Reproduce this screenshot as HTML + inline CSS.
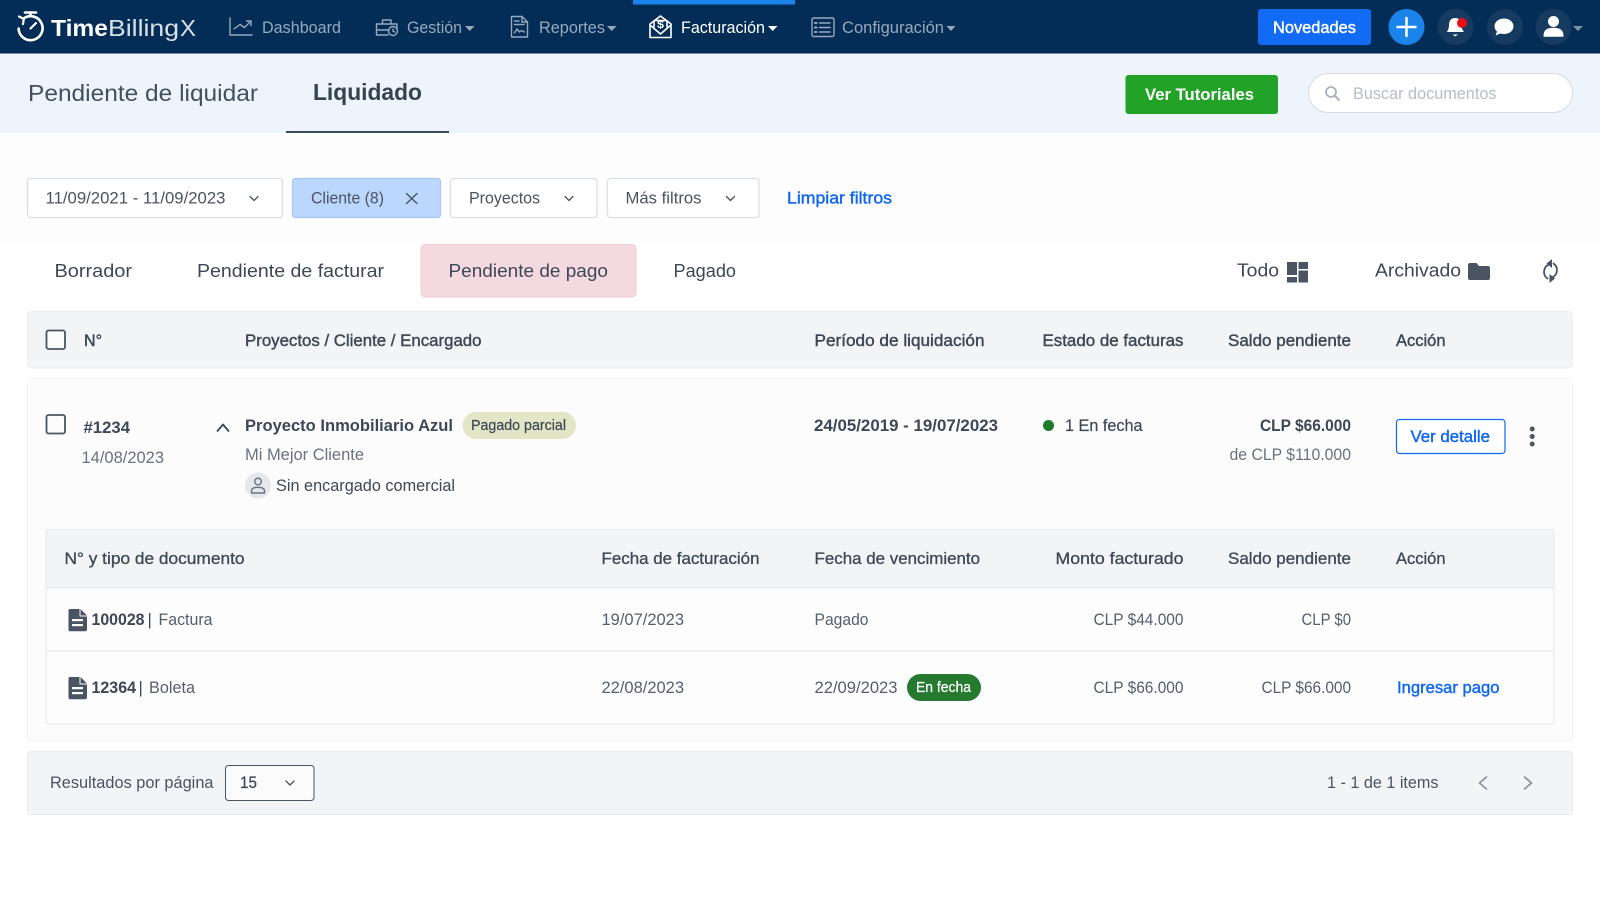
<!DOCTYPE html>
<html lang="es"><head><meta charset="utf-8"><title>TimeBillingX</title>
<style>
html,body{margin:0;padding:0;background:#fff;width:1600px;height:905px;overflow:hidden}
svg{display:block}
text{font-family:"Liberation Sans",sans-serif;font-size:16.6px;fill:#4a5461;white-space:pre}
.s{stroke:currentColor;stroke-width:.42px}
.b{font-weight:700}
.nav{fill:#98a9bc}
.d{fill:#3d4856;color:#3d4856}
.g{fill:#69727f}
.m{fill:#555f6c}
.l{fill:#1168f0;color:#1168f0}
.w{fill:#fff;color:#fff}
.i{fill:none;stroke:#98a9bc;stroke-width:1.4;stroke-linecap:round;stroke-linejoin:round}
.iw{fill:none;stroke:#fff;stroke-width:1.7;stroke-linecap:round;stroke-linejoin:round}
.ch{fill:none;stroke:#4a5461;stroke-width:1.3;stroke-linecap:round;stroke-linejoin:round}
</style></head><body>
<svg width="1600" height="905" viewBox="0 0 1600 905" xmlns="http://www.w3.org/2000/svg">
<rect width="1600" height="905" fill="#fff"/>
<!-- top nav -->
<rect width="1600" height="53" fill="#032d57"/>
<rect x="633" width="162" height="4.5" fill="#1b84ea"/>
<g class="iw" style="stroke-width:2.6">
<path d="M25 12.5H36"/><path d="M30.5 12.5V15.5"/>
<path d="M23.5 18.5A12 12 0 1 1 18.6 28.5"/><path d="M19 16.5L23.8 19L23 24" style="stroke-width:2.2"/>
<path d="M30.5 28.5L36 23" style="stroke-width:2.2"/>
</g>
<text x="51" y="36" textLength="57" lengthAdjust="spacingAndGlyphs" class="b w" style="font-size:23.5px">Time</text>
<text x="108" y="36" textLength="71" lengthAdjust="spacingAndGlyphs" class="w" style="font-size:23.5px;opacity:.85">Billing</text>
<text x="180" y="36" textLength="16" lengthAdjust="spacingAndGlyphs" class="w" style="font-size:23.5px;opacity:.85">X</text>
<g class="i">
<path d="M230 18V35H252"/><path d="M234 29L240 24.5L244.5 27.5L250.5 21.5"/><path d="M246.5 21H251V25.5"/>
<path d="M376.5 24H397V29"/><path d="M376.5 24V35H388"/><path d="M376.5 30H389"/><path d="M382.5 24V20H391V24"/><circle cx="393" cy="31" r="4.5"/><path d="M393 29V31.2L394.8 32"/>
<path d="M511.5 16.5H522L527.5 22V37H511.5Z"/><path d="M522 16.5V22H527.5"/><path d="M514.5 21H519M514.5 24.5H524"/><path d="M514.5 33L517 29L519.5 32L521.5 30.5L524.5 32"/>
<rect x="812" y="18" width="22" height="18.5" rx="1.5"/><path d="M819.5 23H830M819.5 27.5H830M819.5 32H830"/><path d="M815 23H816.5M815 27.5H816.5M815 32H816.5" style="stroke-width:2"/>
</g>
<g class="iw" style="stroke-width:1.6">
<path d="M650 24L660.5 16L671 24V37.5H650Z"/><path d="M650 25L660.5 34L671 25"/>
<path d="M654 27V20.5H667V27"/>
</g>
<text x="657" y="28" textLength="7" lengthAdjust="spacingAndGlyphs" class="b w" style="font-size:11px">$</text>
<text x="262" y="33" textLength="79" lengthAdjust="spacingAndGlyphs" class="nav">Dashboard</text>
<text x="407" y="33" textLength="55" lengthAdjust="spacingAndGlyphs" class="nav">Gestión</text>
<text x="539" y="33" textLength="66" lengthAdjust="spacingAndGlyphs" class="nav">Reportes</text>
<text x="681" y="33" textLength="84" lengthAdjust="spacingAndGlyphs" class="w">Facturación</text>
<text x="842" y="33" textLength="102" lengthAdjust="spacingAndGlyphs" class="nav">Configuración</text>
<path d="M465 26H474.5L469.7 31Z" fill="#98a9bc"/><path d="M607 26H616.5L611.7 31Z" fill="#98a9bc"/>
<path d="M768 26H777.5L772.7 31Z" fill="#fff"/><path d="M946.5 26H955.5L951 31Z" fill="#98a9bc"/>
<path d="M1573 26H1583L1578 31Z" fill="#7f93a8"/>
<rect x="1258" y="9" width="113" height="36" rx="3" fill="#116bf5"/>
<text x="1273" y="33" textLength="83" lengthAdjust="spacingAndGlyphs" class="w s">Novedades</text>
<circle cx="1406.5" cy="27" r="18" fill="#1b84ea"/>
<path d="M1406.5 18V36M1397.5 27H1415.5" stroke="#fff" stroke-width="2.5" stroke-linecap="round"/>
<circle cx="1455.5" cy="27" r="18" fill="#163a60"/><circle cx="1505" cy="27" r="18" fill="#163a60"/><circle cx="1553.5" cy="27" r="18" fill="#163a60"/>
<path d="M1455 18C1450.5 18 1449 21.5 1449 25C1449 29 1447.5 30.5 1447 32H1464C1463 30.5 1461.5 29 1461.5 25C1461.5 21.5 1460 18 1455 18Z" fill="#fff"/>
<path d="M1452.5 34.5H1458L1455.2 36.5Z" fill="#fff"/><circle cx="1462" cy="23" r="5" fill="#ee0c16"/>
<path d="M1504 18.5C1498.5 18.500 1494.5 22 1494.5 26.3C1494.5 28.5 1495.500 30.3 1497 31.5L1495.5 35.5L1500.5 33.5C1501.5 33.9 1502.8 34.1 1504 34.1C1509.5 34.1 1513.5 30.6 1513.5 26.3C1513.5 22 1509.5 18.5 1504 18.5Z" fill="#fff"/>
<circle cx="1553.5" cy="21.5" r="5.5" fill="#fff"/><path d="M1543.5 36C1543.5 30 1547 27.8 1553.5 27.8C1560 27.8 1563.5 30 1563.5 36C1563.5 36.5 1563 36.8 1562.5 36.8H1544.5C1544 36.8 1543.5 36.5 1543.5 36Z" fill="#fff"/>

<!-- sub header -->
<rect y="53" width="1600" height="80" fill="#edf4fc"/>
<rect y="52.5" width="1600" height="1" fill="#02234a"/>
<text x="28" y="101" textLength="230" lengthAdjust="spacingAndGlyphs" style="font-size:23.3px;fill:#45505e">Pendiente de liquidar</text>
<text x="313" y="100" textLength="109" lengthAdjust="spacingAndGlyphs" class="b" style="font-size:23.3px;fill:#37424f">Liquidado</text>
<rect x="286" y="131" width="163" height="2" fill="#3b4a5c"/>
<rect x="1125.5" y="75" width="152.5" height="39" rx="3" fill="#22a328"/>
<text x="1145" y="100" textLength="109" lengthAdjust="spacingAndGlyphs" class="b w">Ver Tutoriales</text>
<rect x="1308.5" y="73.5" width="264" height="39" rx="19.5" fill="#fff" stroke="#d5dae2"/>
<circle cx="1331" cy="92" r="5" fill="none" stroke="#aab2bf" stroke-width="1.8"/><path d="M1335 96L1339 100" stroke="#aab2bf" stroke-width="2" stroke-linecap="round"/>
<text x="1353" y="99" textLength="143.5" lengthAdjust="spacingAndGlyphs" style="fill:#b5bdc9">Buscar documentos</text>

<!-- filters -->
<rect y="133" width="1600" height="110" fill="#fdfdfd"/>
<rect x="27.5" y="178.5" width="255" height="39" rx="3" fill="#fff" stroke="#dcdfe4" stroke-width="1.3"/>
<text x="45.5" y="203.5" textLength="180" lengthAdjust="spacingAndGlyphs">11/09/2021 - 11/09/2023</text>
<path class="ch" d="M250 196.500L254 200.500L258 196.500"/>
<rect x="292.5" y="178.5" width="148" height="39" rx="3" fill="#bcd7fd" stroke="#a6c8f8" stroke-width="1.3"/>
<text x="311" y="203.5" textLength="73" lengthAdjust="spacingAndGlyphs">Cliente (8)</text>
<path d="M406.5 193.5L417 203.5M417 193.5L406.5 203.5" stroke="#4a5461" stroke-width="1.4" stroke-linecap="round"/>
<rect x="450.5" y="178.5" width="146.5" height="39" rx="3" fill="#fff" stroke="#dcdfe4" stroke-width="1.3"/>
<text x="469" y="203.5" textLength="71" lengthAdjust="spacingAndGlyphs">Proyectos</text>
<path class="ch" d="M565 196.500L569 200.500L573 196.500"/>
<rect x="607.5" y="178.5" width="151.5" height="39" rx="3" fill="#fff" stroke="#dcdfe4" stroke-width="1.3"/>
<text x="625.5" y="203.5" textLength="76" lengthAdjust="spacingAndGlyphs">Más filtros</text>
<path class="ch" d="M726.500 196.500L730.500 200.500L734.500 196.500"/>
<text x="787" y="203.5" textLength="105" lengthAdjust="spacingAndGlyphs" class="l s">Limpiar filtros</text>

<!-- status tabs -->
<text x="54.500" y="277" textLength="77.500" lengthAdjust="spacingAndGlyphs" class="d" style="font-size:18.600px">Borrador</text>
<text x="197" y="277" textLength="187" lengthAdjust="spacingAndGlyphs" class="d" style="font-size:18.600px">Pendiente de facturar</text>
<rect x="421" y="244.5" width="215" height="52.5" rx="4" fill="#f5d9e0" stroke="#f1cdd6"/>
<text x="448.500" y="277" textLength="159.500" lengthAdjust="spacingAndGlyphs" class="d" style="font-size:18.600px">Pendiente de pago</text>
<text x="673.500" y="277" textLength="62.500" lengthAdjust="spacingAndGlyphs" class="d" style="font-size:18.600px">Pagado</text>
<text x="1237" y="276.5" textLength="42" lengthAdjust="spacingAndGlyphs" class="d" style="font-size:18.600px">Todo</text>
<g fill="#4a5463"><rect x="1287" y="262" width="10" height="13"/><rect x="1298.500" y="262" width="9.5" height="7"/><rect x="1287" y="277" width="10" height="5.5"/><rect x="1298.500" y="270.500" width="9.5" height="12"/></g>
<text x="1375" y="276.5" textLength="86" lengthAdjust="spacingAndGlyphs" class="d" style="font-size:18.600px">Archivado</text>
<path d="M1468 265C1468 264 1468.7 263 1470 263H1476.5L1479 266H1488C1489.3 266 1490 267 1490 268V278C1490 279.3 1489.3 280 1488 280H1470C1468.7 280 1468 279.3 1468 278Z" fill="#4a5463"/>
<g fill="none" stroke="#4a5463" stroke-width="1.800" stroke-linecap="round">
<path d="M1549 264.500A8 8 0 0 0 1547.500 278.500"/><path d="M1552 277.500A8 8 0 0 0 1553.500 263.500"/>
</g>
<path d="M1552 259L1552 268L1546.500 263.500Z" fill="#4a5463"/><path d="M1549.500 283L1549.500 274L1555 278.500Z" fill="#4a5463"/>

<!-- main table header -->
<rect x="27.5" y="311.5" width="1545" height="56.5" rx="4" fill="#f3f4f6" stroke="#ebedf0"/>
<rect x="46.5" y="330.5" width="18.5" height="18.5" rx="2" fill="#fbfbfc" stroke="#4a5563" stroke-width="1.8"/>
<g class="d">
<text x="84" y="346" textLength="18" lengthAdjust="spacingAndGlyphs" class="d s">N°</text>
<text x="245" y="346" textLength="236.500" lengthAdjust="spacingAndGlyphs" class="d s">Proyectos / Cliente / Encargado</text>
<text x="814.500" y="346" textLength="170" lengthAdjust="spacingAndGlyphs" class="d s">Período de liquidación</text>
<text x="1042.500" y="346" textLength="141" lengthAdjust="spacingAndGlyphs" class="d s">Estado de facturas</text>
<text x="1228" y="346" textLength="123" lengthAdjust="spacingAndGlyphs" class="d s">Saldo pendiente</text>
<text x="1396" y="346" textLength="49.500" lengthAdjust="spacingAndGlyphs" class="d s">Acción</text>
</g>

<!-- row card -->
<rect x="27.5" y="378.5" width="1545" height="362.5" rx="4" fill="#fcfcfd" stroke="#eff2f6"/>
<rect x="46.5" y="415" width="18.5" height="18.5" rx="2" fill="#fbfbfc" stroke="#4a5563" stroke-width="1.8"/>
<text x="83.500" y="433" textLength="46.500" lengthAdjust="spacingAndGlyphs" class="b d">#1234</text>
<text x="81.500" y="463" textLength="82.500" lengthAdjust="spacingAndGlyphs" class="g">14/08/2023</text>
<path d="M217.5 431L223 424.5L228.5 431" fill="none" stroke="#3d4856" stroke-width="1.8" stroke-linecap="round" stroke-linejoin="round"/>
<text x="245" y="431" textLength="208" lengthAdjust="spacingAndGlyphs" class="b d">Proyecto Inmobiliario Azul</text>
<rect x="462.500" y="412" width="113.500" height="27" rx="13.5" fill="#e2e5c6"/>
<text x="471" y="430" textLength="95" lengthAdjust="spacingAndGlyphs" class="d s" style="font-size:14.5px;stroke-width:.2px">Pagado parcial</text>
<text x="245" y="460" textLength="119" lengthAdjust="spacingAndGlyphs" class="g">Mi Mejor Cliente</text>
<circle cx="258" cy="485.5" r="13" fill="#e5e7eb"/>
<circle cx="258" cy="481.5" r="3.3" fill="none" stroke="#69727f" stroke-width="1.4"/><path d="M251.5 493V491C251.5 488.3 254 487.3 258 487.3C262 487.3 264.5 488.3 264.5 491V493Z" fill="none" stroke="#69727f" stroke-width="1.4" stroke-linejoin="round"/>
<text x="276" y="491" textLength="179" lengthAdjust="spacingAndGlyphs" class="d">Sin encargado comercial</text>
<text x="814" y="431" textLength="184" lengthAdjust="spacingAndGlyphs" class="b d">24/05/2019 - 19/07/2023</text>
<circle cx="1048.5" cy="425.5" r="5.5" fill="#1f7a2c"/>
<text x="1065" y="431" textLength="77.500" lengthAdjust="spacingAndGlyphs" class="d s" style="stroke-width:.2px">1 En fecha</text>
<text x="1260" y="431" textLength="91" lengthAdjust="spacingAndGlyphs" class="b d">CLP $66.000</text>
<text x="1229.500" y="460" textLength="121.500" lengthAdjust="spacingAndGlyphs" class="g">de CLP $110.000</text>
<rect x="1396.5" y="419.5" width="108.5" height="34" rx="3" fill="#fff" stroke="#1168f0" stroke-width="1.2"/>
<text x="1410.500" y="442" textLength="79.500" lengthAdjust="spacingAndGlyphs" class="l s">Ver detalle</text>
<circle cx="1532.2" cy="429" r="2.5" fill="#4b5563"/><circle cx="1532.2" cy="436.5" r="2.5" fill="#4b5563"/><circle cx="1532.2" cy="444" r="2.5" fill="#4b5563"/>

<!-- nested table -->
<rect x="46" y="529.5" width="1508" height="194.5" rx="3" fill="#fdfdfe" stroke="#e5e7eb"/>
<path d="M46 587.5V532.5A3 3 0 0 1 49 529.5H1551A3 3 0 0 1 1554 532.5V587.5Z" fill="#f3f4f6" stroke="#e8eaee"/>
<rect x="46" y="587" width="1508" height="1.5" fill="#e9ebef"/>
<rect x="46" y="650.5" width="1508" height="1.2" fill="#e5e7eb"/>
<text x="64.500" y="564" textLength="180" lengthAdjust="spacingAndGlyphs" class="d s" style="stroke-width:.3px">N° y tipo de documento</text>
<text x="601.500" y="564" textLength="158" lengthAdjust="spacingAndGlyphs" class="d s" style="stroke-width:.3px">Fecha de facturación</text>
<text x="814.500" y="564" textLength="165.500" lengthAdjust="spacingAndGlyphs" class="d s" style="stroke-width:.3px">Fecha de vencimiento</text>
<text x="1055.500" y="564" textLength="128" lengthAdjust="spacingAndGlyphs" class="d s" style="stroke-width:.3px">Monto facturado</text>
<text x="1228" y="564" textLength="123" lengthAdjust="spacingAndGlyphs" class="d s" style="stroke-width:.3px">Saldo pendiente</text>
<text x="1396" y="564" textLength="49.500" lengthAdjust="spacingAndGlyphs" class="d s" style="stroke-width:.3px">Acción</text>

<path d="M70 609H80.5L87 615.500V629.5C87 630.5 86.2 631.2 85.3 631.200H70C69.100 631.200 68.500 630.5 68.500 629.5V610.500C68.500 609.600 69.100 609 70 609Z" fill="#4a5463"/>
<path d="M80 609V616H87" fill="none" stroke="#fcfcfd" stroke-width="1"/>
<rect x="72" y="619" width="11" height="2.2" fill="#fcfcfd"/><rect x="72" y="624" width="11" height="2.2" fill="#fcfcfd"/>
<text x="91.500" y="625" textLength="53" lengthAdjust="spacingAndGlyphs" class="b d">100028</text>
<text x="147.500" y="625" class="d">|</text>
<text x="158.500" y="625" textLength="54" lengthAdjust="spacingAndGlyphs" class="m">Factura</text>
<text x="601.500" y="625" textLength="82.500" lengthAdjust="spacingAndGlyphs" class="m">19/07/2023</text>
<text x="814.500" y="625" textLength="54" lengthAdjust="spacingAndGlyphs" class="m">Pagado</text>
<text x="1093.500" y="625" textLength="90" lengthAdjust="spacingAndGlyphs" class="m">CLP $44.000</text>
<text x="1301.500" y="625" textLength="49.500" lengthAdjust="spacingAndGlyphs" class="m">CLP $0</text>

<path d="M70 677H80.5L87 683.5V697.5C87 698.5 86.2 699.2 85.3 699.200H70C69.100 699.200 68.500 698.5 68.500 697.5V678.500C68.500 677.600 69.100 677 70 677Z" fill="#4a5463"/>
<path d="M80 677V684H87" fill="none" stroke="#fcfcfd" stroke-width="1"/>
<rect x="72" y="687" width="11" height="2.2" fill="#fcfcfd"/><rect x="72" y="692" width="11" height="2.2" fill="#fcfcfd"/>
<text x="91.500" y="693" textLength="44.500" lengthAdjust="spacingAndGlyphs" class="b d">12364</text>
<text x="138.500" y="693" class="d">|</text>
<text x="149" y="693" textLength="46" lengthAdjust="spacingAndGlyphs" class="m">Boleta</text>
<text x="601.500" y="693" textLength="82.500" lengthAdjust="spacingAndGlyphs" class="m">22/08/2023</text>
<text x="814.500" y="693" textLength="83" lengthAdjust="spacingAndGlyphs" class="m">22/09/2023</text>
<rect x="907" y="674" width="74" height="27" rx="13.5" fill="#257a2f"/>
<text x="916" y="692" textLength="55" lengthAdjust="spacingAndGlyphs" class="w s" style="font-size:14.5px;stroke-width:.25px">En fecha</text>
<text x="1093.500" y="693" textLength="90" lengthAdjust="spacingAndGlyphs" class="m">CLP $66.000</text>
<text x="1261.500" y="693" textLength="89.500" lengthAdjust="spacingAndGlyphs" class="m">CLP $66.000</text>
<text x="1397" y="693" textLength="102.500" lengthAdjust="spacingAndGlyphs" class="l s">Ingresar pago</text>

<!-- pagination -->
<rect x="27.5" y="751.5" width="1545" height="63" rx="4" fill="#f3f4f6" stroke="#e8eaed"/>
<text x="50" y="788" textLength="163.500" lengthAdjust="spacingAndGlyphs">Resultados por página</text>
<rect x="225.5" y="765.5" width="88.5" height="35" rx="3" fill="#fbfbfc" stroke="#4b5563"/>
<text x="240" y="788" textLength="17" lengthAdjust="spacingAndGlyphs" class="d s" style="stroke-width:.25px">15</text>
<path class="ch" d="M286 781L290 785L294 781"/>
<text x="1327" y="788" textLength="111.500" lengthAdjust="spacingAndGlyphs">1 - 1 de 1 items</text>
<path d="M1486.500 777L1479.500 783L1486.500 789" fill="none" stroke="#8a929e" stroke-width="1.7" stroke-linecap="round" stroke-linejoin="round"/>
<path d="M1524.5 777L1531.500 783L1524.5 789" fill="none" stroke="#8a929e" stroke-width="1.7" stroke-linecap="round" stroke-linejoin="round"/>
</svg>
</body></html>
